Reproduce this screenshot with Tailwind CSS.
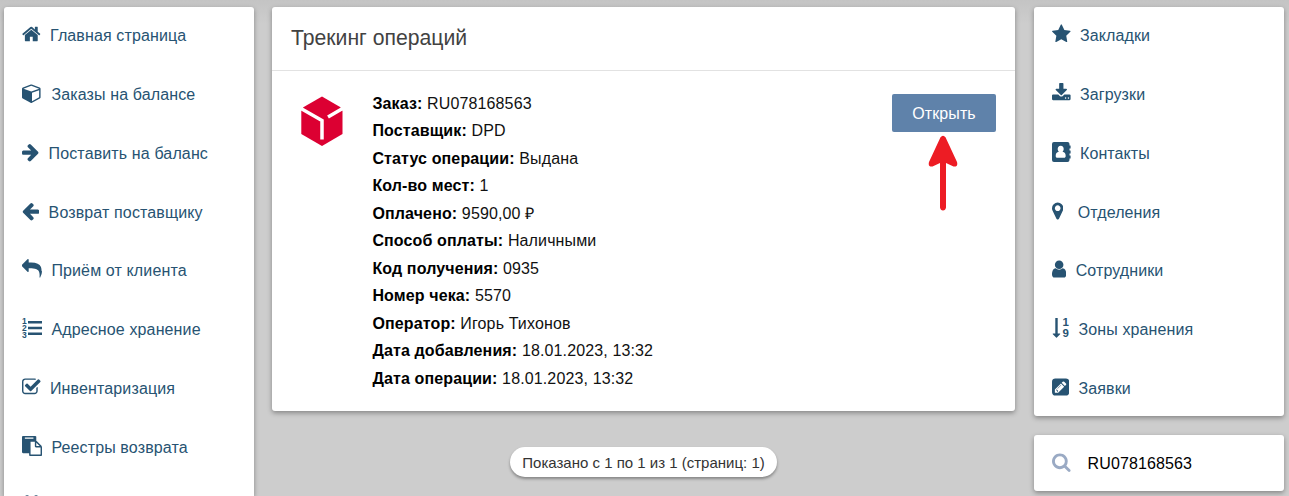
<!DOCTYPE html>
<html lang="ru">
<head>
  <meta charset="UTF-8" />
  <meta name="viewport" content="width=device-width, initial-scale=1.0"/>
  <title>Трекинг операций</title>
  <script src="https://cdn.jsdelivr.net/npm/@tailwindcss/browser@4"></script>
</head>
<body class="bg-[#cdcdcd] h-screen overflow-hidden font-['Liberation_Sans',Arial,sans-serif] text-base">

  <div class="h-full flex items-start pl-1 pt-[7px] bg-linear-to-b from-[#c4c4c4] to-[#cdcdcd] to-[24px]">

    <!-- Left menu -->
    <nav class="w-[250px] h-[489px] overflow-y-clip shrink-0 bg-white rounded-t-[3px] shadow-[0_2px_5px_rgba(0,0,0,0.35)] pl-[18px] pt-[1.2px] text-[#275372] tracking-[0.13px] flex flex-col gap-[2.8px]">
      <a href="#" class="h-14 shrink-0 flex items-center gap-[9.4px]">
        <svg class="w-[18.6px] h-5 -mt-1" viewBox="64 0 1664 1792" fill="currentColor"><path d="M1472 992v480q0 26-19 45t-45 19h-384v-384h-256v384h-384q-26 0-45-19t-19-45v-480q0-1 .5-3t.5-3l575-474 575 474q1 2 1 6zm223-69l-62 74q-8 9-21 11h-3q-13 0-21-7l-692-577-692 577q-12 8-24 7-13-2-21-11l-62-74q-8-10-7-23.5t11-21.5l719-599q32-26 76-26t76 26l244 204v-195q0-14 9-23t23-9h192q14 0 23 9t9 23v408l219 182q10 8 11 21.5t-7 23.5z"/></svg>
        <span>Главная страница</span>
      </a>
      <a href="#" class="h-14 shrink-0 flex items-center gap-[9.4px]">
        <svg class="w-5 h-5 -mt-1" viewBox="0 0 1792 1792" fill="currentColor"><path d="M896 1629l640-349v-636l-640 233v752zm-64-865l698-254-698-254-698 254zm832-252v768q0 35-18 65t-49 47l-704 384q-28 16-61 16t-61-16l-704-384q-31-17-49-47t-18-65v-768q0-40 23-73t61-47l704-256q22-8 44-8t44 8l704 256q38 14 61 47t23 73z"/></svg>
        <span>Заказы на балансе</span>
      </a>
      <a href="#" class="h-14 shrink-0 flex items-center gap-[9.4px]">
        <svg class="w-[17.2px] h-5 -mt-1" viewBox="128 0 1536 1792" fill="currentColor"><path d="M1600 960q0 54-37 91l-651 651q-39 37-91 37-51 0-90-37l-75-75q-38-38-38-91t38-91l293-293h-704q-52 0-84.5-37.5t-32.5-90.5v-128q0-53 32.5-90.5t84.5-37.5h704l-293-294q-38-36-38-90t38-90l75-75q38-38 90-38 53 0 91 38l651 651q37 35 37 90z"/></svg>
        <span>Поставить на баланс</span>
      </a>
      <a href="#" class="h-14 shrink-0 flex items-center gap-[9.4px]">
        <svg class="w-[17.2px] h-5 -mt-1" viewBox="128 0 1536 1792" fill="currentColor"><path d="M1664 896v128q0 53-32.5 90.5t-84.5 37.5h-704l293 294q38 36 38 90t-38 90l-75 76q-37 37-90 37-52 0-91-37l-651-652q-37-37-37-90 0-52 37-91l651-650q38-38 91-38 52 0 90 38l75 74q38 38 38 91t-38 91l-293 293h704q52 0 84.5 37.5t32.5 90.5z"/></svg>
        <span>Возврат поставщику</span>
      </a>
      <a href="#" class="h-14 shrink-0 flex items-center gap-[9.4px]">
        <svg class="w-5 h-5 -mt-1" viewBox="0 0 1792 1792" fill="currentColor"><path d="M1792 1120q0 166-127 451-3 7-10.5 24t-13.5 30-13 22q-12 17-28 17-15 0-23.5-10t-8.5-25q0-9 2.5-26.5t2.5-23.5q5-68 5-123 0-112-19.5-200.5t-54-153.5-89-112-113.5-78.5-141-46-159.5-23.5-178-6h-224v256q0 26-19 45t-45 19-45-19l-512-512q-19-19-19-45t19-45l512-512q19-19 45-19t45 19 19 45v256h224q713 0 875 403 53 134 53 333z"/></svg>
        <span>Приём от клиента</span>
      </a>
      <a href="#" class="h-14 shrink-0 flex items-center gap-[9.4px]">
        <svg class="w-5 h-5 -mt-1 overflow-visible" viewBox="0 0 20 20" fill="currentColor">
          <path d="M6 3h14v2.5H6zM6 8.8h14v2.5H6zM6 14.5h14v2.5H6z"/>
          <g font-size="8.5" font-weight="bold" font-family="Liberation Sans" letter-spacing="0"><text x="0" y="6">1</text><text x="0" y="13">2</text><text x="0" y="20">3</text></g>
        </svg>
        <span>Адресное хранение</span>
      </a>
      <a href="#" class="h-14 shrink-0 flex items-center gap-[9.4px]">
        <svg class="w-[18.6px] h-5 -mt-1" viewBox="64 0 1664 1792" fill="currentColor"><path d="M1472 930v318q0 119-84.5 203.5t-203.5 84.5h-832q-119 0-203.5-84.5t-84.5-203.5v-832q0-119 84.5-203.5t203.5-84.5h832q63 0 117 25 15 7 18 23 3 17-9 29l-49 49q-10 10-23 10-3 0-9-2-23-6-45-6h-832q-66 0-113 47t-47 113v832q0 66 47 113t113 47h832q66 0 113-47t47-113v-254q0-13 9-22l64-64q10-10 23-10 6 0 12 3 20 8 20 29zm231-489l-814 814q-24 24-57 24t-57-24l-430-430q-24-24-24-57t24-57l110-110q24-24 57-24t57 24l263 263 647-647q24-24 57-24t57 24l110 110q24 24 24 57t-24 57z"/></svg>
        <span>Инвентаризация</span>
      </a>
      <a href="#" class="h-14 shrink-0 flex items-center gap-[9.4px]">
        <svg class="w-5 h-5 -mt-1" viewBox="0 0 1792 1792" fill="currentColor"><path d="M768 1664h896v-640h-416q-40 0-68-28t-28-68v-416h-384v1152zm256-1440v-64q0-13-9.5-22.5t-22.5-9.5h-704q-13 0-22.5 9.5t-9.5 22.5v64q0 13 9.5 22.5t22.5 9.5h704q13 0 22.5-9.5t9.5-22.5zm256 672h299l-299-299v299zm512 128v672q0 40-28 68t-68 28h-960q-40 0-68-28t-28-68v-160h-544q-40 0-68-28t-28-68v-1344q0-40 28-68t68-28h1088q40 0 68 28t28 68v328q21 13 36 28l408 408q28 28 48 76t20 88z"/></svg>
        <span>Реестры возврата</span>
      </a>
      <!-- calendar, cut off by the window edge -->
      <a href="#" class="h-14 shrink-0 flex items-center">
        <svg class="w-5 h-5 -mt-1" viewBox="0 0 20 20" fill="none" stroke="currentColor" stroke-width="1.5"><rect x="1" y="3.5" width="17" height="15" rx="1"/><path d="M1 8h17"/><rect x="3.8" y="0.9" width="2.6" height="4.5" rx="1.2"/><rect x="12.8" y="0.9" width="2.6" height="4.5" rx="1.2"/></svg>
      </a>
    </nav>

    <!-- Tracking -->
    <main class="ml-[18px] w-[743px] shrink-0 flex flex-col items-center">
      <section class="w-full h-[404px] bg-white rounded-[3px] shadow-[0_2px_5px_rgba(0,0,0,0.35)]">
        <h2 class="h-16 border-b border-[#e2e2e2] pl-[19px] pb-0.5 flex items-center text-[21.2px] text-[#424242]">Трекинг операций</h2>
        <div class="flex items-start pl-[29px] pr-[19px] pt-[19px]">
          <svg class="w-[42px] h-[51px] mt-1.5 shrink-0" viewBox="0 0 42 51">
            <path fill="#dc0032" d="M21 .5 39.5 11.2 41.5 15V38L21 50 .3 38V15L2.3 11.2z"/>
            <path fill="none" stroke="#fff" stroke-width="3.5" d="M-.5 12.3 21 24.5V43.5M42 12.3 27 21"/>
          </svg>
          <div class="ml-[29.4px] -mt-[0.5px] text-[#111] leading-[27.5px] tracking-[0.13px]">
            <p><b class="text-black">Заказ:</b> RU078168563</p>
            <p><b class="text-black">Поставщик:</b> DPD</p>
            <p><b class="text-black">Статус операции:</b> Выдана</p>
            <p><b class="text-black">Кол-во мест:</b> 1</p>
            <p><b class="text-black">Оплачено:</b> 9590,00 ₽</p>
            <p><b class="text-black">Способ оплаты:</b> Наличными</p>
            <p><b class="text-black">Код получения:</b> 0935</p>
            <p><b class="text-black">Номер чека:</b> 5570</p>
            <p><b class="text-black">Оператор:</b> Игорь Тихонов</p>
            <p><b class="text-black">Дата добавления:</b> 18.01.2023, 13:32</p>
            <p><b class="text-black">Дата операции:</b> 18.01.2023, 13:32</p>
          </div>
          <div class="relative ml-auto mt-1">
            <button class="block w-[104px] h-[38px] pt-0.5 rounded-[2px] bg-[#5f82aa] text-white tracking-[0.1px]">Открыть</button>
            <!-- pointer to the button -->
            <svg class="absolute left-[36px] top-[41px] w-[30px] h-[76px]" viewBox="0 0 30 76"><path fill="#ed1c24" d="M12.5 2.2Q15 -.8 17.5 2.2L29 27Q30.3 32 25.5 31.5L18 28V72.5Q17.5 75.5 15 75.5T12 72.5V28L4.5 31.5Q-.3 32 1 27Z"/></svg>
          </div>
        </div>
      </section>

      <div class="mt-9 w-[267px] h-[30px] pt-0.5 rounded-full bg-white shadow-[0_2px_3px_rgba(0,0,0,0.35)] flex items-center justify-center text-[15px] text-[#333] whitespace-nowrap">Показано с 1 по 1 из 1 (страниц: 1)</div>
    </main>

    <!-- Right menu -->
    <aside class="ml-[19px] w-[250px] shrink-0 flex flex-col gap-[19px] tracking-[0.1px]">
      <nav class="h-[409px] bg-white rounded-[3px] shadow-[0_2px_5px_rgba(0,0,0,0.35)] pl-[18px] pt-[1.2px] text-[#275372] flex flex-col gap-[2.8px]">
        <a href="#" class="h-14 shrink-0 flex items-center gap-[9.4px]">
          <svg class="w-[18.6px] h-5 -mt-1" viewBox="64 0 1664 1792" fill="currentColor"><path d="M1728 647q0 22-26 48l-363 354 86 500q1 7 1 20 0 21-10.5 35.5t-30.5 14.5q-19 0-40-12l-449-236-449 236q-22 12-40 12-21 0-31.5-14.5t-10.5-35.5q0-6 2-20l86-500-364-354q-25-27-25-48 0-37 56-46l502-73 225-455q19-41 49-41t49 41l225 455 502 73q56 9 56 46z"/></svg>
          <span>Закладки</span>
        </a>
        <a href="#" class="h-14 shrink-0 flex items-center gap-[9.4px]">
          <svg class="w-[18.6px] h-5 -mt-1" viewBox="64 0 1664 1792" fill="currentColor"><path d="M1344 1344q0-26-19-45t-45-19-45 19-19 45 19 45 45 19 45-19 19-45zm256 0q0-26-19-45t-45-19-45 19-19 45 19 45 45 19 45-19 19-45zm128-224v320q0 40-28 68t-68 28h-1472q-40 0-68-28t-28-68v-320q0-40 28-68t68-28h465l135 136q58 56 136 56t136-56l136-136h464q40 0 68 28t28 68zm-325-569q17 41-14 70l-448 448q-18 19-45 19t-45-19l-448-448q-31-29-14-70 17-39 59-39h256v-448q0-26 19-45t45-19h256q26 0 45 19t19 45v448h256q42 0 59 39z"/></svg>
          <span>Загрузки</span>
        </a>
        <a href="#" class="h-14 shrink-0 flex items-center gap-[9.4px]">
          <svg class="w-[18.6px] h-5 -mt-1" viewBox="0 0 18.6 20"><path fill="currentColor" d="M2 0h13.500q2 0 2 2v1.500h.8q.3 0 .3.300v2.400q0 .300-.3.300h-.8v2h.8q.3 0 .3.300v2.400q0 .300-.3.300h-.8v2h.8q.3 0 .3.300v2.400q0 .300-.3.300h-.8V18q0 2-2 2H2q-2 0-2-2V2Q0 0 2 0z"/><path fill="#fff" d="M8.700 3.800c2 0 3 1.500 3 3.200 0 1.200-.5 2.200-1.200 2.800 2.200.2 3.200 1.800 3.200 4.200 0 1.100-.6 1.800-1.600 1.800H5.300c-1 0-1.600-.7-1.600-1.800 0-2.400 1-4 3.200-4.200C6.200 9.200 5.700 8.200 5.700 7c0-1.700 1-3.200 3-3.200z"/></svg>
          <span>Контакты</span>
        </a>
        <a href="#" class="h-14 shrink-0 flex items-center gap-[9.4px]">
          <svg class="w-[11.4px] h-5 mr-[5px] -mt-1" viewBox="384 0 1024 1792" fill="currentColor"><path d="M1152 640q0-106-75-181t-181-75-181 75-75 181 75 181 181 75 181-75 75-181zm256 0q0 109-33 179l-364 774q-16 33-47.5 52t-67.5 19-67.5-19-46.5-52l-365-774q-33-70-33-179 0-212 150-362t362-150 362 150 150 362z"/></svg>
          <span>Отделения</span>
        </a>
        <a href="#" class="h-14 shrink-0 flex items-center gap-[9.4px]">
          <svg class="w-[14.3px] h-5 -mt-1" viewBox="256 0 1280 1792" fill="currentColor"><path d="M1536 1399q0 109-62.5 187t-150.5 78h-854q-88 0-150.5-78t-62.5-187q0-85 8.5-160.5t31.5-152 58.5-131 94-89 134.5-34.5q131 128 313 128t313-128q76 0 134.5 34.5t94 89 58.5 131 31.5 152 8.5 160.5zm-256-887q0 159-112.5 271.5t-271.5 112.5-271.5-112.5-112.5-271.5 112.5-271.5 271.5-112.5 271.5 112.5 112.5 271.5z"/></svg>
          <span>Сотрудники</span>
        </a>
        <a href="#" class="h-14 shrink-0 flex items-center gap-[9.4px]">
          <svg class="w-[17.2px] h-5 -mt-1 overflow-visible" viewBox="0 0 17.2 20" fill="currentColor">
            <path d="M3.3 0h2.4v15.5h2.2q.7 0 .2.7L4.9 19.6q-.4.4-.8 0L.8 16.2q-.4-.7.3-.7h2.2z"/>
            <g font-size="11.5" font-weight="bold" font-family="Liberation Sans"><text x="10.4" y="8.2">1</text><text x="10.4" y="19.5">9</text></g>
          </svg>
          <span>Зоны хранения</span>
        </a>
        <a href="#" class="h-14 shrink-0 flex items-center gap-[9.4px]">
          <svg class="w-[17.2px] h-5 -mt-1" viewBox="0 0 1536 1792" fill="currentColor"><path d="M404 1108l152 152-52 52h-56v-96h-96zm414-390q14 13-3 30l-291 291q-17 17-30 3-14-13 3-30l291-291q17-17 30-3zm-274 690l544-544-288-288-544 544v288h288zm608-608l92-92q28-28 28-68t-28-68l-152-152q-28-28-68-28t-68 28l-92 92zm384-384v960q0 119-84.5 203.5t-203.5 84.5h-960q-119 0-203.5-84.5t-84.5-203.5v-960q0-119 84.5-203.5t203.5-84.5h960q119 0 203.5 84.5t84.5 203.5z"/></svg>
          <span>Заявки</span>
        </a>
      </nav>

      <!-- Search -->
      <div class="h-14 bg-white rounded-[3px] shadow-[0_2px_5px_rgba(0,0,0,0.35)] pl-[18px] pt-0.5 flex items-center gap-[17px] text-black">
        <svg class="w-[18.6px] h-5 -mt-1 text-[#9aaac4]" viewBox="64 0 1664 1792" fill="currentColor"><path d="M1216 832q0-185-131.5-316.5t-316.5-131.5-316.5 131.5-131.5 316.5 131.5 316.5 316.5 131.5 316.5-131.5 131.5-316.5zm512 832q0 52-38 90t-90 38q-54 0-90-38l-343-342q-179 124-399 124-143 0-273.5-55.5t-225-150-150-225-55.5-273.5 55.5-273.5 150-225 225-150 273.5-55.5 273.5 55.5 225 150 150 225 55.5 273.5q0 220-124 399l343 343q37 37 37 90z"/></svg>
        <span>RU078168563</span>
      </div>
    </aside>

  </div>

</body>
</html>
